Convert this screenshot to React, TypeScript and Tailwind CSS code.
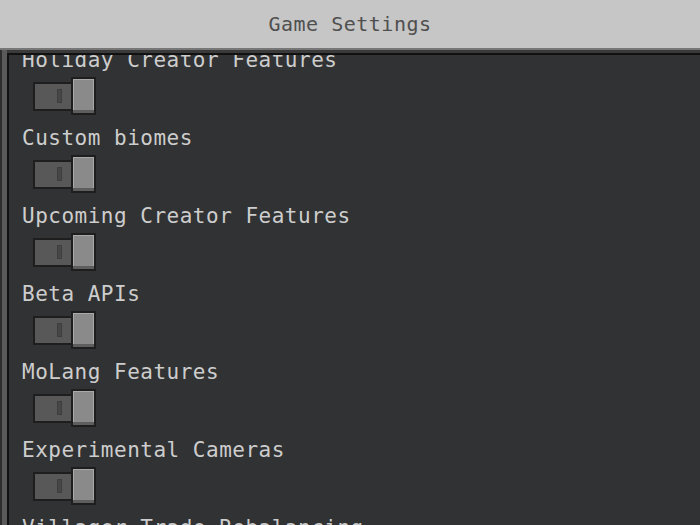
const rows = [
  'Holiday Creator Features',
  'Custom biomes',
  'Upcoming Creator Features',
  'Beta APIs',
  'MoLang Features',
  'Experimental Cameras',
  'Villager Trade Rebalancing',
]

function Toggle() {
  return (
    <div className="flex items-center ml-[11px] mt-[5px] mb-[11px]">
      <div className="w-[40px] h-[29px] border-2 border-[#1e1e1e] bg-[#585858] flex items-center pl-[22px]">
        <div className="w-[5px] h-[14px] bg-[#474747] border border-[#3e3e3e]" />
      </div>
      <div className="w-[25px] h-[38px] -ml-[2px] border-2 border-[#1e1e1e] bg-[#8a8a8a] shadow-[inset_0_-3px_0_#5e5e5e,inset_1px_1px_0_#a9a9a9,inset_-1px_0_0_#a9a9a9]" />
    </div>
  )
}

export default function App() {
  return (
    <div className="w-[700px] h-[525px] flex flex-col overflow-hidden bg-[#313233] font-['DejaVu_Sans_Mono',monospace]">
      <div className="h-[50px] shrink-0 bg-[#c6c6c6] border-b-2 border-[#777777] flex items-center justify-center">
        <h1 className="text-[20px] leading-[24px] tracking-[0.5px] text-[#4f4f4f]">Game Settings</h1>
      </div>
      <div className="flex-1 flex min-h-0 bg-[#3a3a3a]">
        <div className="w-[2px] bg-[#2e2e2e]" />
        <div className="w-[5px] bg-[#5a5a5a]" />
        <div className="flex-1 flex flex-col min-h-0">
          <div className="h-[3px] shrink-0 bg-[#3a3a3a]" />
          <div className="flex-1 min-h-0 overflow-hidden border-t-2 border-l-2 border-[#111111] bg-[#313233] pl-[13px]">
            <div className="-mt-[7px] flex flex-col">
              {rows.map((r) => (
                <div key={r} className="flex flex-col items-start">
                  <p className="text-[21px] leading-[24px] tracking-[0.5px] text-[#cdcdcd] whitespace-nowrap">{r}</p>
                  <Toggle />
                </div>
              ))}
            </div>
          </div>
        </div>
      </div>
    </div>
  )
}
